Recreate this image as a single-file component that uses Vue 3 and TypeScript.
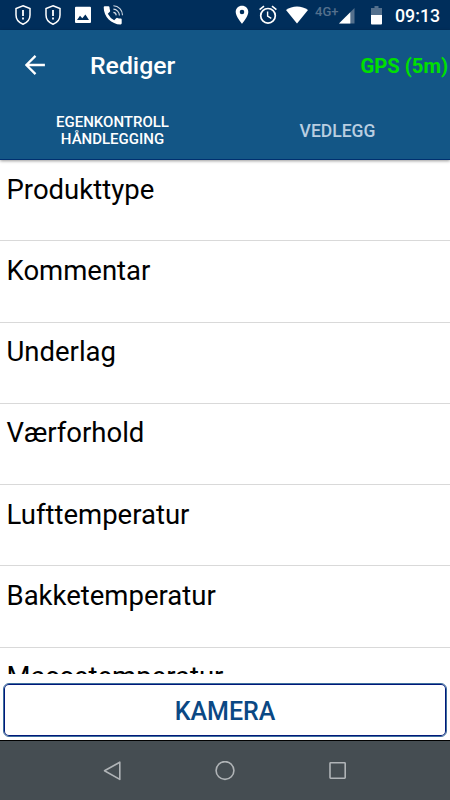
<script setup lang="ts">
const fields: string[] = [
  'Produkttype',
  'Kommentar',
  'Underlag',
  'Værforhold',
  'Lufttemperatur',
  'Bakketemperatur',
  'Massetemperatur',
]
</script>

<template>
  <div class="screen">
    <div class="status">
      <svg v-for="n in 2" :key="n" class="shield" viewBox="0 0 18 22">
        <path d="M9 1.8 L16 4.6 V11 C16 15.4 13 18.7 9 20.2 C5 18.7 2 15.4 2 11 V4.6 Z" fill="none" stroke="#fff" stroke-width="1.5" />
        <path d="M9 6 V12 M9 13.6 V15.6" fill="none" stroke="#fff" stroke-width="1.8" />
      </svg>
      <svg class="image" viewBox="0 0 18 18">
        <path fill-rule="evenodd" d="M2 .8 H16 Q17 .8 17 1.8 V15.9 Q17 16.9 16 16.9 H2 Q1 16.9 1 15.9 V1.8 Q1 .8 2 .8 Z M3 14 H15 L11.4 8.4 L8.3 12.3 L6 9.8 Z" fill="#fff" />
      </svg>
      <svg class="phone" viewBox="0 0 22 22">
        <path d="M1.7 3.4 Q1.7 2.3 2.7 2.3 H6.4 Q7.4 2.3 7.5 3.3 Q7.6 5.2 8.1 6.6 Q8.3 7.3 7.8 7.8 L5.8 9.8 Q8 14.1 12.2 16.2 L14.2 14.2 Q14.7 13.7 15.4 13.9 Q16.9 14.4 18.7 14.5 Q19.7 14.6 19.7 15.6 V19.3 Q19.7 20.4 18.6 20.4 C9.5 20.4 1.7 12.5 1.7 3.4 Z" fill="#fff" />
        <path d="M11.4 8.4 A3.2 3.2 0 0 1 14.2 11.4 M11.4 5.1 A6.4 6.4 0 0 1 17.4 11.4 M11.4 1.8 A9.2 9.2 0 0 1 20.5 11.2" fill="none" stroke="#d3dce6" stroke-width="1.1" />
      </svg>
      <span class="spacer"></span>
      <svg class="pin" viewBox="0 0 14 20">
        <path fill-rule="evenodd" d="M7 .8 C3.4 .8 .7 3.5 .7 7 C.7 11.5 7 18.7 7 18.7 S13.3 11.5 13.3 7 C13.3 3.5 10.6 .8 7 .8 Z M7 4.7 A2.3 2.3 0 1 1 7 9.3 A2.3 2.3 0 1 1 7 4.7 Z" fill="#fff" />
      </svg>
      <svg class="alarm" viewBox="0 0 18 20">
        <circle cx="9" cy="10.8" r="7.3" fill="none" stroke="#fff" stroke-width="1.7" />
        <path d="M.6 4.7 L5 1.1 M17.4 4.7 L13 1.1" stroke="#fff" stroke-width="1.6" />
        <path d="M8.6 6.4 V11.1 L12.3 13.3" fill="none" stroke="#fff" stroke-width="1.4" />
      </svg>
      <svg class="wifi" viewBox="0 0 22 18">
        <path d="M0 3.9 C6 -.8 16 -.8 22 3.9 L11 17.4 Z" fill="#fff" />
      </svg>
      <span class="network">4G+</span>
      <svg class="signal" viewBox="0 0 16 16">
        <path d="M15.5 0 V15.5 H0 Z" fill="#54708d" />
        <path d="M11.3 4.2 V15.5 H0 Z" fill="#fff" />
      </svg>
      <svg class="battery" viewBox="0 0 11 19">
        <path d="M3.5 0 H7.5 V2 H11 V9 H0 V2 H3.5 Z" fill="#54708d" />
        <path d="M0 9 H11 V17.6 Q11 18.5 10.1 18.5 H.9 Q0 18.5 0 17.6 Z" fill="#fff" />
      </svg>
      <span class="time">09:13</span>
    </div>

    <header class="header">
      <div class="toolbar">
        <svg class="back" viewBox="0 0 20 20">
          <path d="M19.9 10 H1.6 M10.5 .9 L1.4 10 L10.5 19.1" fill="none" stroke="#fff" stroke-width="2.3" />
        </svg>
        <h1 class="title">Rediger</h1>
        <span class="gps">GPS (5m)</span>
      </div>
      <nav class="tabs">
        <div class="tab active">EGENKONTROLL<br />HÅNDLEGGING</div>
        <div class="tab">VEDLEGG</div>
      </nav>
    </header>

    <main class="list">
      <div v-for="field in fields" :key="field" class="row">{{ field }}</div>
    </main>

    <div class="actions">
      <button class="camera" type="button">KAMERA</button>
    </div>

    <footer class="navbar">
      <svg class="key" viewBox="0 0 20 20"><path d="M17.8 1.2 V18.4 L2.5 9.8 Z" fill="none" stroke="#b0b4b7" stroke-width="1.6" stroke-linejoin="round" /></svg>
      <svg class="key" viewBox="0 0 20 20"><circle cx="10" cy="9.5" r="8.9" fill="none" stroke="#b0b4b7" stroke-width="1.6" /></svg>
      <svg class="key" viewBox="0 0 20 20"><rect x="2" y="1.8" width="15.2" height="15.4" rx=".6" fill="none" stroke="#b0b4b7" stroke-width="1.6" /></svg>
    </footer>
  </div>
</template>

<style>
body {
  margin: 0;
  background: #fff;
}
</style>

<style scoped>
.screen {
  width: 450px;
  height: 800px;
  display: flex;
  flex-direction: column;
  overflow: hidden;
  background: #fff;
  font-family: Roboto, sans-serif;
}
svg {
  display: block;
  flex: none;
}
.status {
  flex: none;
  box-sizing: border-box;
  height: 30px;
  padding: 0 10px 0 13.5px;
  display: flex;
  align-items: center;
  background: #002e5b;
  color: #fff;
}
.shield {
  width: 18px;
  height: 22px;
  margin-right: 12px;
}
.image {
  width: 18px;
  height: 18px;
  margin-right: 10px;
}
.phone {
  width: 22px;
  height: 22px;
}
.spacer {
  flex: 1;
}
.pin {
  width: 14px;
  height: 20px;
  margin-right: 10px;
}
.alarm {
  width: 18px;
  height: 20px;
  margin-right: 9px;
}
.wifi {
  width: 22px;
  height: 18px;
  margin-right: 7px;
}
.network {
  width: 24px;
  margin-top: -7px;
  font-size: 13px;
  font-weight: 500;
  line-height: 14px;
  color: #54708d;
}
.signal {
  width: 16px;
  height: 16px;
  margin: 2px 16px 0 0;
}
.battery {
  width: 11px;
  height: 19px;
  margin: 1px 13px 0 0;
}
.time {
  width: 45px;
  font-size: 17.8px;
  font-weight: 500;
  line-height: 30px;
  margin-top: 2px;
}
.header {
  flex: none;
  box-sizing: border-box;
  height: 130px;
  background: #135686;
  border-bottom: 1px solid #003070;
  box-shadow: 0 1px 3px rgba(0, 0, 0, 0.4);
  position: relative;
  color: #fff;
}
.toolbar {
  height: 70px;
  padding: 0 2px 0 25px;
  display: flex;
  align-items: center;
}
.back {
  width: 20px;
  height: 20px;
  margin-right: 45px;
}
.title {
  flex: 1;
  margin: 2px 0 0;
  font-size: 24.8px;
  font-weight: 500;
  line-height: 30px;
}
.gps {
  font-size: 20.2px;
  font-weight: 700;
  line-height: 24px;
  margin-top: 2px;
  color: #00e000;
}
.tabs {
  height: 59px;
  padding-top: 1px;
  display: grid;
  grid-template-columns: 1fr 1fr;
  align-items: center;
  text-align: center;
}
.tab {
  padding-top: 1px;
  font-size: 17.5px;
  font-weight: 500;
  line-height: 20px;
  color: #b9cee1;
}
.tab.active {
  font-size: 15px;
  line-height: 17.5px;
  color: #fff;
}
.list {
  flex: none;
  height: 514px;
  overflow: hidden;
}
.row {
  box-sizing: border-box;
  height: 81.25px;
  padding: 13.5px 6.5px 0;
  border-bottom: 1px solid #d9d9d9;
  font-size: 27.5px;
  line-height: 32px;
  color: #000;
}
.actions {
  flex: none;
  box-sizing: border-box;
  height: 66px;
  padding: 9px 3px 3px;
}
.camera {
  display: block;
  box-sizing: border-box;
  width: 100%;
  height: 54px;
  padding: 3px 0 0;
  background: #fff;
  border: 1px solid #3f6f9d;
  border-radius: 6px;
  box-shadow: inset 0 0 0 1px #00187a;
  font-family: Roboto, sans-serif;
  font-size: 25px;
  font-weight: 500;
  line-height: 30px;
  color: #0a4884;
}
.navbar {
  flex: none;
  box-sizing: border-box;
  height: 60px;
  padding: 0 56px;
  border-top: 1px solid #000;
  background: #454d52;
  display: grid;
  grid-template-columns: repeat(3, 1fr);
  align-items: center;
  justify-items: center;
}
.key {
  width: 20px;
  height: 20px;
}
</style>
